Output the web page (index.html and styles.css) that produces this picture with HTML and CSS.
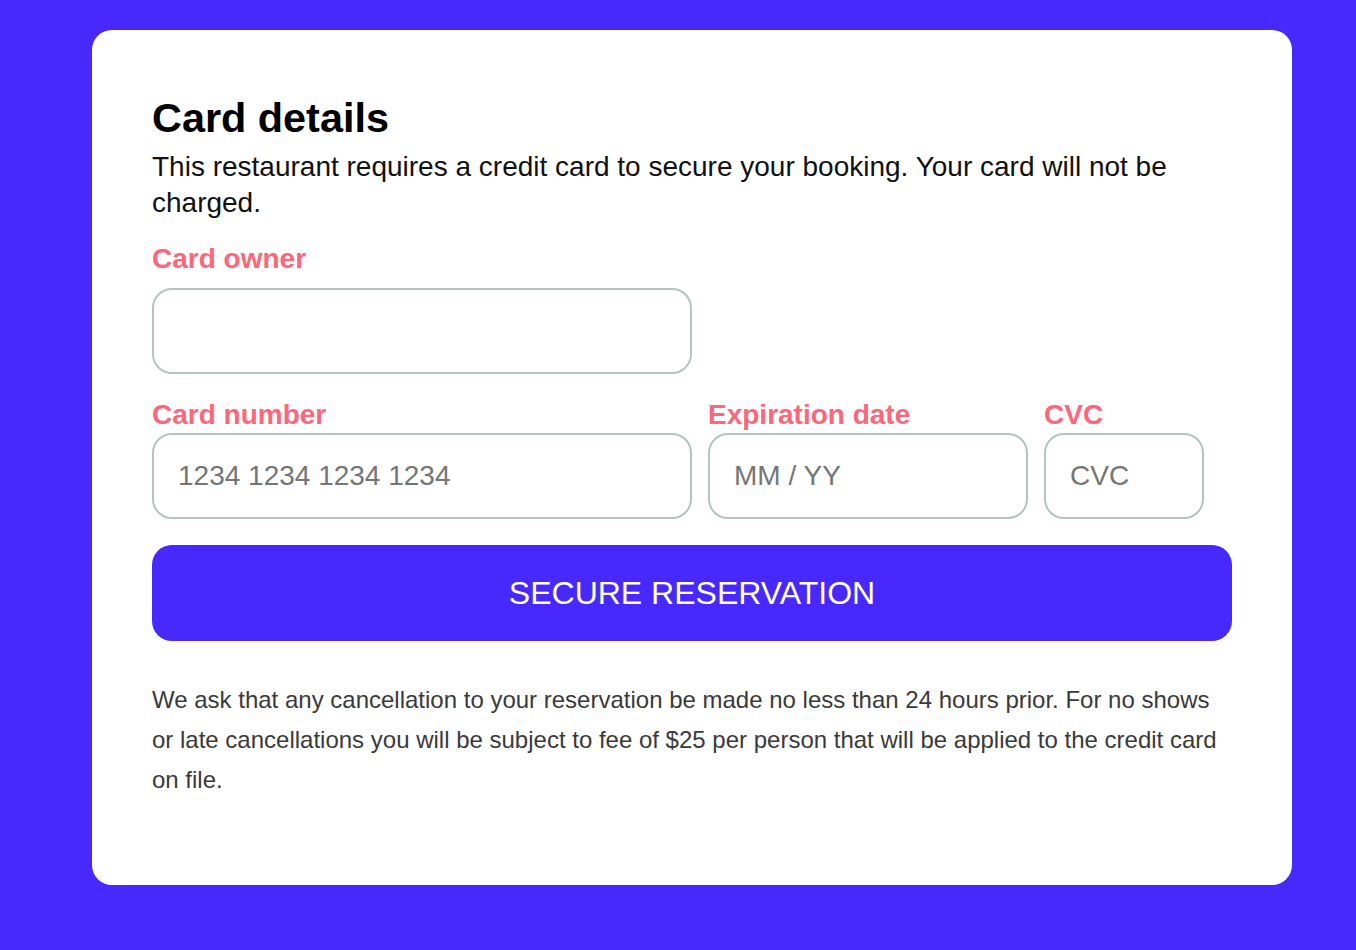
FILE: index.html
```html
<!DOCTYPE html>
<html lang="en">
<head>
<meta charset="utf-8">
<title>Card details</title>
<link rel="stylesheet" href="styles.css">
</head>
<body>
<main class="card">
  <h1 class="title">Card details</h1>
  <p class="intro">This restaurant requires a credit card to secure your booking. Your card will not be charged.</p>

  <div class="field field-owner">
    <label class="label" for="owner">Card owner</label>
    <input class="input" id="owner" type="text">
  </div>

  <div class="row">
    <div class="field field-number">
      <label class="label" for="number">Card number</label>
      <input class="input" id="number" type="text" placeholder="1234 1234 1234 1234">
    </div>
    <div class="field field-exp">
      <label class="label" for="exp">Expiration date</label>
      <input class="input" id="exp" type="text" placeholder="MM / YY">
    </div>
    <div class="field field-cvc">
      <label class="label" for="cvc">CVC</label>
      <input class="input" id="cvc" type="text" placeholder="CVC">
    </div>
  </div>

  <button class="submit" type="button">SECURE RESERVATION</button>

  <p class="policy">We ask that any cancellation to your reservation be made no less than 24 hours prior. For no shows or late cancellations you will be subject to fee of $25 per person that will be applied to the credit card on file.</p>
</main>
</body>
</html>
```

FILE: styles.css
```css
* {
  box-sizing: border-box;
}

html, body {
  margin: 0;
  background: #4829fd;
}

body {
  padding: 30px 0 0 92px;
  min-height: 950px;
  font-family: "Liberation Sans", Arial, Helvetica, sans-serif;
}

.card {
  width: 1200px;
  height: 855px;
  background: #ffffff;
  border-radius: 20px;
  padding: 65px 60px 0 60px;
}

.title {
  margin: 0;
  font-size: 41.4px;
  line-height: 46px;
  font-weight: 700;
  color: #000000;
}

.intro {
  margin: 8px 0 0 0;
  font-size: 28px;
  line-height: 36px;
  color: #111111;
}

.field {
  display: flex;
  flex-direction: column;
}

.label {
  font-size: 28px;
  line-height: 32px;
  font-weight: 700;
  color: #fe6679;
}

.field-owner {
  margin-top: 22px;
  width: 540px;
}

.field-owner .label {
  margin-bottom: 13px;
}

.row {
  display: flex;
  gap: 16px;
  margin-top: 25px;
}

.row .label {
  margin-bottom: 2px;
}

.field-number {
  width: 540px;
}

.field-exp {
  width: 320px;
}

.field-cvc {
  width: 160px;
}

.input {
  width: 100%;
  height: 86px;
  border: 2px solid #b4c4c4;
  border-radius: 20px;
  padding: 0 24px;
  font-family: "Liberation Sans", Arial, Helvetica, sans-serif;
  font-size: 28px;
  color: #222222;
  background: #ffffff;
  outline: none;
}

.input::placeholder {
  color: #767676;
  opacity: 1;
}

.submit {
  display: block;
  width: 1080px;
  height: 96px;
  margin-top: 26px;
  border: none;
  border-radius: 20px;
  background: #4829fd;
  color: #ffffff;
  font-family: "Liberation Sans", Arial, Helvetica, sans-serif;
  font-size: 32px;
  font-weight: 400;
  cursor: pointer;
}

.policy {
  margin: 39px 0 0 0;
  width: 1075px;
  font-size: 24px;
  line-height: 40px;
  color: #3a3a3a;
}
```
